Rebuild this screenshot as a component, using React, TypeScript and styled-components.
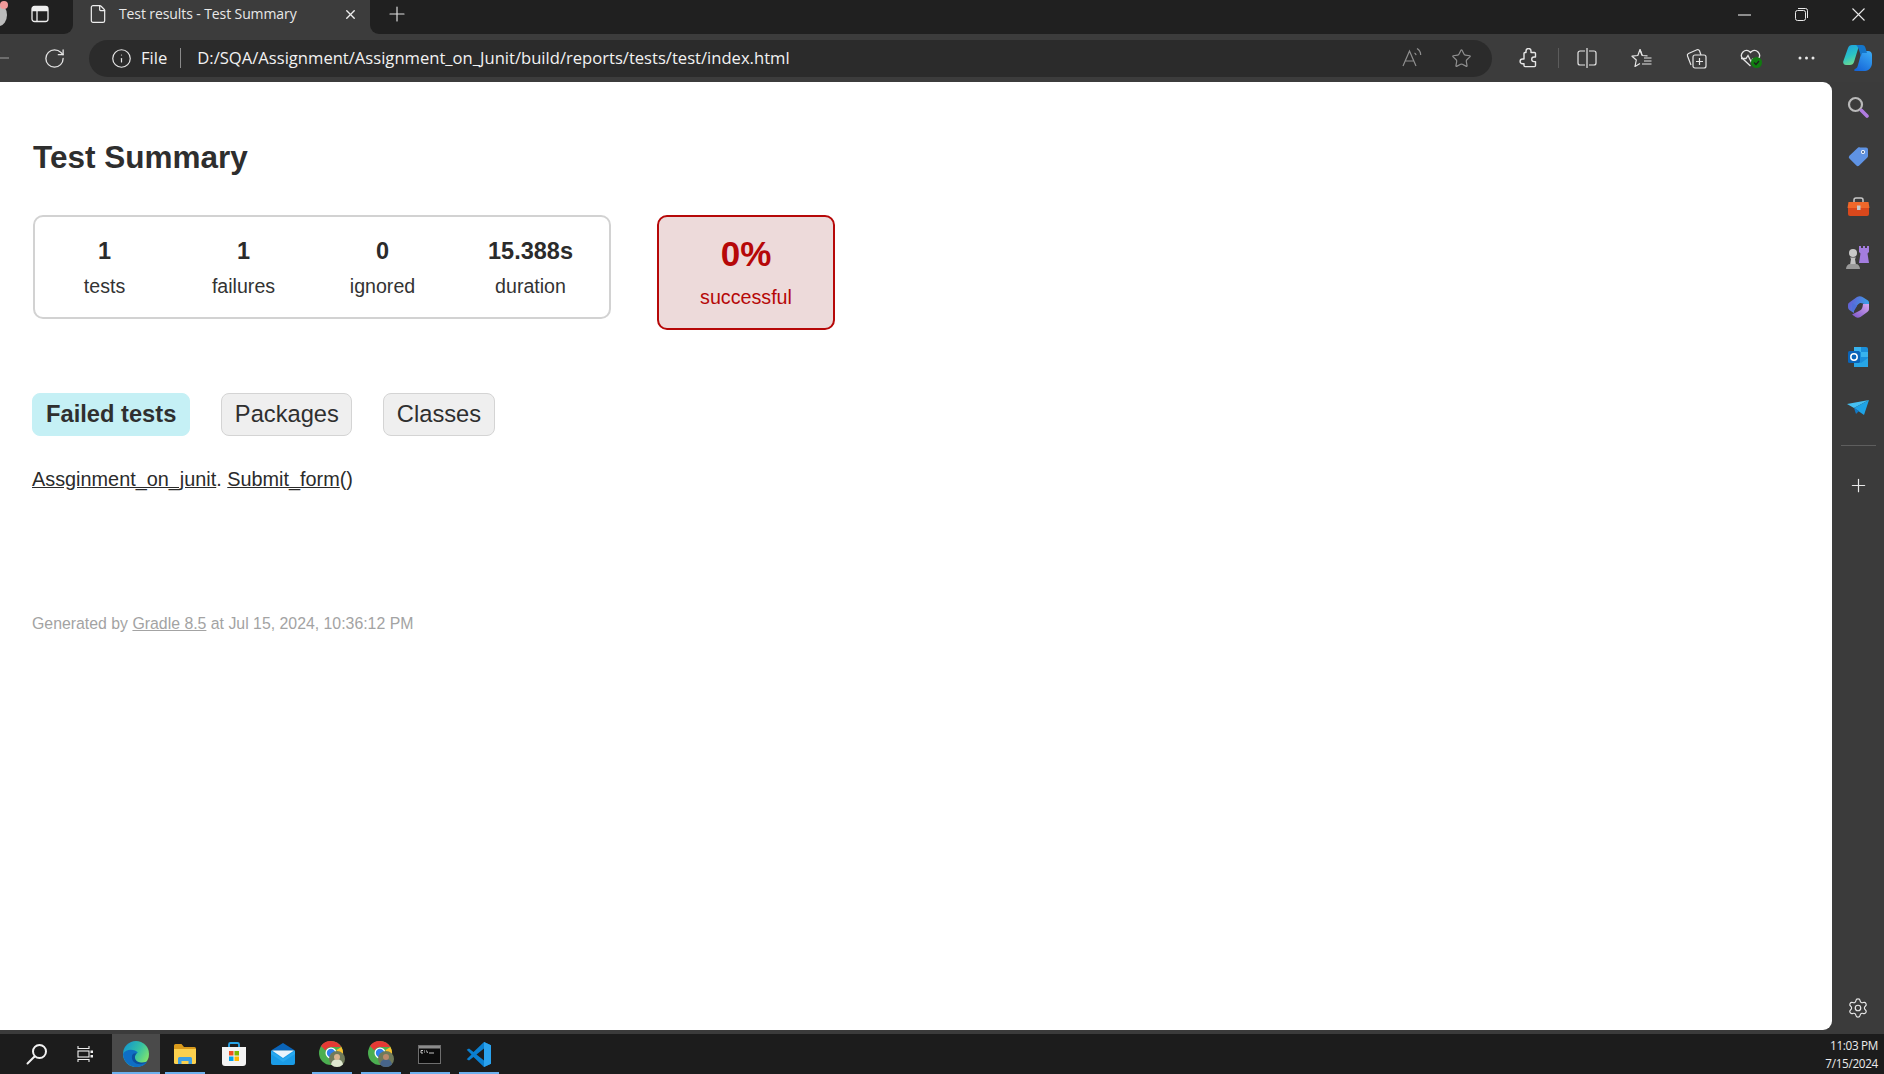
import React from 'react';
import styled, { createGlobalStyle } from 'styled-components';
import { File as FileIcon, Info, Plus, RotateCw, Settings, Star, X } from 'lucide-react';

const GlobalStyle = createGlobalStyle`
  html, body { margin: 0; padding: 0; height: 100%; overflow: hidden; }
  body { font-family: "Liberation Sans", Arial, sans-serif; background: #3b3b3b; }
`;

const Screen = styled.div`
  display: flex;
  flex-direction: column;
  width: 1884px;
  height: 1074px;
  overflow: hidden;
`;

const TabStrip = styled.div`
  display: flex;
  flex: none;
  height: 34px;
  background: #3c3c3c;
`;

const StripLeft = styled.div`
  position: relative;
  width: 73px;
  display: flex;
  align-items: center;
  padding: 0 0 6px 31px;
  box-sizing: border-box;
  background: #202020;
  border-bottom-right-radius: 9px;
  overflow: hidden;
`;

const StripRight = styled.div`
  flex: 1;
  display: flex;
  align-items: center;
  padding: 0 0 6px 15px;
  background: #202020;
  border-bottom-left-radius: 9px;
`;

const Tab = styled.div`
  width: 297px;
  display: flex;
  align-items: center;
  padding: 0 0 6px 15px;
  box-sizing: border-box;
  color: #eeeeee;
`;

const TabTitle = styled.span`
  width: 224px;
  margin: -2px 0 0 11px;
  font: 14px "Open Sans", "Noto Sans", sans-serif;
  letter-spacing: -0.1px;
  color: #e8e8e8;
  white-space: nowrap;
`;

const WindowControls = styled.div`
  display: flex;
  margin-left: auto;
  align-items: center;
  padding-right: 19px;
  gap: 44px;
`;

const Toolbar = styled.div`
  display: flex;
  flex: none;
  align-items: center;
  height: 48px;
  background: #3c3c3c;
`;

const Refresh = styled.div`
  display: flex;
  margin-left: 34px;
  color: #e4e4e4;
`;

const AddressPill = styled.div`
  display: flex;
  align-items: center;
  width: 1403px;
  height: 37px;
  margin-left: 23px;
  padding: 0 20px 0 22px;
  box-sizing: border-box;
  border-radius: 19px;
  background: #2b2b2b;
  color: #e6e6e6;
`;

const FileLabel = styled.span`
  margin: -2px 0 0 9px;
  font: 16.6px "Open Sans", "Noto Sans", sans-serif;
  color: #f2f2f2;
`;

const PillDivider = styled.span`
  width: 1px;
  height: 20px;
  margin: 0 16px 0 13px;
  background: #8a8a8a;
`;

const Url = styled.span`
  flex: 1;
  margin-top: -2px;
  font: 16.6px "Open Sans", "Noto Sans", sans-serif;
  color: #f2f2f2;
  white-space: nowrap;
`;

const PillIcons = styled.div`
  display: flex;
  align-items: center;
  gap: 29px;
  color: #8f8f8f;
`;

const ToolIcons = styled.div`
  display: flex;
  align-items: center;
  margin-left: 27px;
  color: #e6e6e6;
`;

const ToolSlot = styled.div<{ $w?: number }>`
  display: flex;
  justify-content: center;
  align-items: center;
  width: ${(p) => p.$w ?? 55}px;
`;

const ToolDivider = styled.span`
  width: 1px;
  height: 20px;
  margin-left: 20px;
  background: #5c5c5c;
`;

const Middle = styled.div`
  display: flex;
  flex: 1;
  min-height: 0;
`;

const ContentColumn = styled.div`
  display: flex;
  flex-direction: column;
  flex: none;
  width: 1832px;
  padding-bottom: 4px;
  box-sizing: border-box;
  background: #3b3b3b;
`;

const Page = styled.main`
  flex: 1;
  padding: 57px 0 0 33px;
  box-sizing: border-box;
  background: #ffffff;
  border-radius: 0 9px 9px 0;
  color: #2f2f2f;
`;

const Title = styled.h1`
  margin: 0;
  font-size: 31.5px;
  line-height: 36px;
  font-weight: 700;
  color: #2e2e2e;
`;

const SummaryRow = styled.div`
  display: flex;
  align-items: flex-start;
  margin-top: 40px;
`;

const SummaryBox = styled.div`
  display: grid;
  grid-template-columns: 139px 139px 139px 1fr;
  width: 578px;
  height: 104px;
  box-sizing: border-box;
  padding-top: 20px;
  border: 2px solid #d2d2d2;
  border-radius: 10px;
`;

const Stat = styled.div`
  text-align: center;
`;

const StatValue = styled.div`
  font-size: 23.5px;
  line-height: 28px;
  font-weight: 700;
  color: #2b2b2b;
`;

const StatLabel = styled.div`
  margin-top: 9px;
  font-size: 19.6px;
  line-height: 24px;
  color: #333333;
`;

const RateBox = styled.div`
  width: 178px;
  height: 115px;
  margin-left: 46px;
  padding-top: 16px;
  box-sizing: border-box;
  border: 2px solid #b60808;
  border-radius: 10px;
  background: #eddada;
  color: #b60808;
  text-align: center;
`;

const RateValue = styled.div`
  font-size: 35px;
  line-height: 42px;
  font-weight: 700;
`;

const RateLabel = styled.div`
  margin-top: 10px;
  font-size: 19.7px;
  line-height: 24px;
`;

const TabRow = styled.nav`
  display: flex;
  gap: 31px;
  margin: 63px 0 0 -1px;
`;

const ReportTab = styled.a<{ $active?: boolean }>`
  height: 43px;
  padding: 0 ${(p) => (p.$active ? 13 : 12.5)}px;
  box-sizing: border-box;
  border: 1px solid ${(p) => (p.$active ? '#c5f0f5' : '#d4d4d4')};
  border-radius: 8px;
  background: ${(p) => (p.$active ? '#c5f0f5' : '#efefef')};
  font-size: 23.7px;
  line-height: 41px;
  font-weight: ${(p) => (p.$active ? 700 : 400)};
  color: #2f2f2f;
`;

const TestLine = styled.p`
  margin: 0 0 0 -1px;
  padding-top: 31px;
  font-size: 19.85px;
  line-height: 24px;
  color: #2b2b2b;
`;

const TestLink = styled.a`
  color: #2b2b2b;
  text-decoration: underline;
`;

const Footer = styled.footer`
  margin: 123px 0 0 -1px;
  font-size: 15.85px;
  line-height: 20px;
  color: #a3a3a3;
`;

const FooterLink = styled.a`
  color: #a3a3a3;
  text-decoration: underline;
`;

const Sidebar = styled.aside`
  display: flex;
  flex-direction: column;
  align-items: center;
  flex: 1;
  padding-bottom: 4px;
  background: #3b3b3b;
  color: #e8e8e8;
`;

const SideSlot = styled.div`
  display: flex;
  justify-content: center;
  align-items: center;
  flex: none;
  width: 100%;
  height: 50px;
`;

const SideDivider = styled.div`
  flex: none;
  width: 35px;
  height: 1px;
  margin: 13px 0 29px;
  background: #5e5e5e;
`;

const GearSlot = styled(SideSlot)`
  margin-top: auto;
  height: 44px;
`;

const Taskbar = styled.footer`
  display: flex;
  flex: none;
  align-items: center;
  height: 40px;
  background: #1c1c1c;
`;

const TaskSearch = styled.div`
  display: flex;
  width: 77px;
  padding-left: 26px;
  box-sizing: border-box;
`;

const TaskView = styled.div`
  display: flex;
  width: 35px;
`;

const TaskApp = styled.div<{ $w: number; $open?: boolean; $active?: boolean; $bar?: number }>`
  position: relative;
  display: flex;
  justify-content: center;
  align-items: center;
  width: ${(p) => p.$w}px;
  height: 40px;
  background: ${(p) => (p.$active ? '#4a4a4a' : 'transparent')};
  &::after {
    content: '';
    display: ${(p) => (p.$open ? 'block' : 'none')};
    position: absolute;
    left: 50%;
    bottom: 0;
    width: ${(p) => p.$bar ?? p.$w}px;
    height: 2px;
    transform: translateX(-50%);
    background: #6cb0ee;
  }
`;

const Clock = styled.div`
  margin-left: auto;
  padding-right: 6px;
  font: 11.7px/18px "Open Sans", "Noto Sans", sans-serif;
  letter-spacing: -0.3px;
  color: #ececec;
  text-align: right;
`;

const Avatar = styled.span`
  position: absolute;
  left: -9px;
  top: 4px;
  width: 16px;
  height: 22px;
  border-radius: 50%;
  background: #bcbcbc;
  &::after {
    content: '';
    position: absolute;
    left: 9px;
    top: -3px;
    width: 8px;
    height: 8px;
    border-radius: 50%;
    background: #f19a9a;
  }
`;

const PanelIcon = () => (
  <svg width="18" height="18" viewBox="0 0 18 18" fill="none" stroke="#eeeeee" strokeWidth="1.3">
    <rect x="1" y="1.5" width="16" height="15" rx="2.5" />
    <path d="M1 5.5h16M6 5.5v11" />
    <path d="M1 3.500h16" strokeWidth="3" />
  </svg>
);

const MinimizeIcon = () => (
  <svg width="13" height="13" viewBox="0 0 13 13" stroke="#e8e8e8" strokeWidth="1.1">
    <path d="M0 7h13" />
  </svg>
);

const RestoreIcon = () => (
  <svg width="13" height="13" viewBox="0 0 13 13" fill="none" stroke="#e8e8e8" strokeWidth="1">
    <rect x="0.5" y="2.5" width="10" height="10" rx="2" />
    <path d="M3 .5h7.5a2 2 0 0 1 2 2V10" />
  </svg>
);

const CloseIcon = () => (
  <svg width="13" height="13" viewBox="0 0 13 13" stroke="#e8e8e8" strokeWidth="1.1">
    <path d="M.5.5l12 12M12.5.5l-12 12" />
  </svg>
);

const ReadAloudIcon = () => (
  <svg width="20" height="20" viewBox="0 0 20 20" fill="none" stroke="#8f8f8f" strokeWidth="1.2">
    <path d="M1 18L7.5 3 14 18M3.5 13h8" />
    <path d="M12.500 5c1 .4 1.400 1.100 1.600 2.200" />
    <path d="M15 .5c2.500 1.500 3.700 3.500 3.700 6.500" />
  </svg>
);

const PuzzleIcon = () => (
  <svg width="19" height="20" viewBox="0 0 19 20" fill="none" stroke="#e6e6e6" strokeWidth="1.4" strokeLinejoin="round">
    <path d="M7 4.500V3a2.500 2.500 0 0 1 5 0v1.500h3.500a1 1 0 0 1 1 1V9H15a2.200 2.200 0 0 0 0 4.600h1.500v4a1 1 0 0 1-1 1H6a1 1 0 0 1-1-1v-1.800H3.500a2.400 2.400 0 0 1 0-4.800H5V5.500a1 1 0 0 1 1-1z" />
  </svg>
);

const SplitIcon = () => (
  <svg width="20" height="20" viewBox="0 0 20 20" fill="none" stroke="#e6e6e6" strokeWidth="1.2">
    <path d="M8 3H3a2 2 0 0 0-2 2v10a2 2 0 0 0 2 2h5M12 3h5a2 2 0 0 1 2 2v10a2 2 0 0 1-2 2h-5M10 0v20" />
  </svg>
);

const FavoritesIcon = () => (
  <svg width="21" height="20" viewBox="0 0 21 20" fill="none" stroke="#e6e6e6" strokeWidth="1.2" strokeLinejoin="round">
    <path d="M11 7l-2-5.500L6.800 7.500 1 8.200 5.300 12 4 18.500l5-3" />
    <path d="M9 1.500L11.200 7.500l5.300.3" />
    <path d="M13 10h7.500M13 13h7.500M11 16h9.500" />
  </svg>
);

const CollectionsIcon = () => (
  <svg width="21" height="21" viewBox="0 0 21 21" fill="none" stroke="#e6e6e6" strokeWidth="1.2">
    <rect x="7" y="7" width="13" height="13" rx="2" />
    <path d="M13.500 10v7M10 13.500h7" />
    <path d="M5 17L1.500 8a2 2 0 0 1 1-2.500L11 1.700a2 2 0 0 1 2.500 1L15 7" />
  </svg>
);

const HeartIcon = () => (
  <svg width="23" height="21" viewBox="0 0 23 21" fill="none">
    <path d="M10.500 18L2.500 10.500a5 5 0 0 1 7-7l1 1 1-1a5 5 0 0 1 7 7" stroke="#e6e6e6" strokeWidth="1.3" />
    <path d="M1 10.500h5l2-3 3 6 2-3" stroke="#e6e6e6" strokeWidth="1.3" />
    <circle cx="16.500" cy="14.500" r="5.500" fill="#107c10" />
    <path d="M14 14.500l2 2 3-3.500" stroke="#1d1d1d" strokeWidth="1.2" />
  </svg>
);

const DotsIcon = () => (
  <svg width="17" height="4" viewBox="0 0 17 4" fill="#e8e8e8">
    <circle cx="2" cy="2" r="1.500" />
    <circle cx="8.500" cy="2" r="1.500" />
    <circle cx="15" cy="2" r="1.500" />
  </svg>
);

const CopilotIcon = () => (
  <svg width="30" height="28" viewBox="0 0 30 28">
    <defs>
      <linearGradient id="copA" x1="0" y1="0" x2="0.4" y2="1">
        <stop offset="0" stopColor="#1b9de2" />
        <stop offset="0.6" stopColor="#2cc4c4" />
        <stop offset="1" stopColor="#6fd88f" />
      </linearGradient>
      <linearGradient id="copB" x1="0.8" y1="0" x2="0.2" y2="1">
        <stop offset="0" stopColor="#39a8f4" />
        <stop offset="1" stopColor="#1565d8" />
      </linearGradient>
    </defs>
    <path d="M9 1h10c-2 0-3 1-4 4l-4 13c-.6 2-2 3-4 3H3c-2 0-3.400-2-2.600-4L5 4c.7-2 2-3 4-3z" fill="url(#copA)" />
    <path d="M20 7h5c2.500 0 4 1.500 4 4v8c0 4-3 8-7 8h-9c-2 0-2.600-1-1-2 2-1 2.500-2 3-4l3-11c.4-1.800 1-3 2-3z" fill="url(#copB)" />
    <path d="M19 1c2 0 3 1 3.500 3L24 9h-5l-1 3-2-6c-.6-2-1.500-4-3-5z" fill="#1475c9" />
  </svg>
);

const SearchApp = () => (
  <svg width="22" height="22" viewBox="0 0 22 22" fill="none">
    <circle cx="8.500" cy="8.500" r="6.500" stroke="#b9b9b9" strokeWidth="2.200" />
    <path d="M14.500 14.500l5.500 5.500" stroke="#b07ce0" strokeWidth="3.600" strokeLinecap="round" />
  </svg>
);

const TagApp = () => (
  <svg width="22" height="22" viewBox="0 0 22 22">
    <path d="M12.500 1.500H19a2 2 0 0 1 2 2V10a2 2 0 0 1-.6 1.400l-8.200 8.200a2 2 0 0 1-2.800 0l-7-7a2 2 0 0 1 0-2.800l8.700-8.200a2 2 0 0 1 1.400-.6z" fill="#5f93e4" />
    <circle cx="16" cy="6" r="2" fill="#ffffff" />
    <circle cx="16" cy="6" r="1" fill="#33507e" />
  </svg>
);

const ToolboxApp = () => (
  <svg width="23" height="20" viewBox="0 0 23 20">
    <path d="M7 6V3a2 2 0 0 1 2-2h5a2 2 0 0 1 2 2v3" fill="none" stroke="#c9c9c9" strokeWidth="1.500" />
    <path d="M1.500 5h20l1 6H.5z" fill="#f0682a" />
    <path d="M1 11h21v6a2 2 0 0 1-2 2H3a2 2 0 0 1-2-2z" fill="#d9481c" />
    <rect x="10" y="8.500" width="3.500" height="4.500" fill="#c8c8c8" />
  </svg>
);

const ChessApp = () => (
  <svg width="24" height="24" viewBox="0 0 24 24">
    <path d="M13 1h2v2h2V1h2v2h2V1h2v6l-1.500 1.500L23 18H13l1.500-9.500L13 7z" fill="#a37ddf" />
    <circle cx="7" cy="8" r="4" fill="#c8c8c8" />
    <path d="M4 12.500h6L9 14l1 6H4l1-6z" fill="#c2c2c2" />
    <path d="M0 24c0-3 2-5 4-5h6c2 0 4 2 4 5z" fill="#9a9a9a" />
  </svg>
);

const M365App = () => (
  <svg width="21" height="22" viewBox="0 0 21 22">
    <defs>
      <linearGradient id="m365a" x1="0" y1="0" x2="1" y2="0.3">
        <stop offset="0" stopColor="#6a55d0" />
        <stop offset="1" stopColor="#3aa0e8" />
      </linearGradient>
      <linearGradient id="m365b" x1="0" y1="1" x2="1" y2="0">
        <stop offset="0" stopColor="#7a54c8" />
        <stop offset="1" stopColor="#d7a6ee" />
      </linearGradient>
    </defs>
    <path d="M2 6l7-5c2-1.200 4-1 5.500 0L20 4.500c.7.500 1 1.200 1 2V11l-6-3.500c-2-1-4-.5-5 1L6 13v4L2 14.500C.7 13.700 0 12.500 0 11V9c0-1.200.7-2.200 2-3z" fill="url(#m365a)" />
    <path d="M21 8v5c0 1.300-.6 2.400-2 3.200l-6.500 4.800c-2 1-3.500 1-5 0L4 18.500 11 15c2-1 3-2 3.500-4L15 8z" fill="url(#m365b)" />
    <path d="M4 7l5 3-3 5-2-1z" fill="#4f6fd8" />
  </svg>
);

const OutlookApp = () => (
  <svg width="20" height="20" viewBox="0 0 20 20">
    <path d="M6 0h12a2 2 0 0 1 2 2v16a2 2 0 0 1-2 2H8a2 2 0 0 1-2-2z" fill="#1a8fdb" />
    <path d="M6 0h7v5H6zM13 5h7v5h-7z" fill="#37b3ee" />
    <path d="M6 11l7 5 7-5v9H6z" fill="#27a6e6" />
    <rect x="0" y="4" width="12" height="12" rx="1.500" fill="#0a64b8" />
    <circle cx="6" cy="10" r="3.200" fill="none" stroke="#ffffff" strokeWidth="1.500" />
  </svg>
);

const TelegramApp = () => (
  <svg width="22" height="15" viewBox="0 0 22 15">
    <path d="M0 4l22-4-15 8z" fill="#46c0f2" />
    <path d="M22 0L7 8l10 7z" fill="#1ea3e6" />
    <path d="M7 8l2 6 3-3z" fill="#1278c4" />
  </svg>
);

const TaskSearchIcon = () => (
  <svg width="22" height="22" viewBox="0 0 22 22" fill="none" stroke="#f2f2f2" strokeWidth="2">
    <circle cx="13.500" cy="8.500" r="6.500" />
    <path d="M8.500 13.500L1.500 20.500" strokeLinecap="round" />
  </svg>
);

const TaskViewIcon = () => (
  <svg width="16" height="16" viewBox="0 0 16 16" fill="none" stroke="#f0f0f0" strokeWidth="1.100">
    <path d="M1 0v2.500h11V0M1 16v-2.500h11V16" />
    <rect x="1" y="5" width="11" height="6" />
    <rect x="13.500" y="4.500" width="2.500" height="2.500" fill="#f0f0f0" stroke="none" />
    <rect x="13.500" y="9" width="2.500" height="2.500" fill="#f0f0f0" stroke="none" />
  </svg>
);

const EdgeApp = () => (
  <svg width="26" height="26" viewBox="0 0 26 26">
    <defs>
      <linearGradient id="edgeA" x1="0" y1="0" x2="1" y2="0.6">
        <stop offset="0" stopColor="#0d8fd6" />
        <stop offset="0.6" stopColor="#35c1a3" />
        <stop offset="1" stopColor="#7fe36f" />
      </linearGradient>
    </defs>
    <circle cx="13" cy="13" r="13" fill="url(#edgeA)" />
    <path d="M0 13C1 24 10 26 13 26c5 0 9-2 11-5-4 2-12 2-13-4-.5-3 1.500-5 4-5.500C12 8 3 7 0 13z" fill="#0f6ec4" />
    <path d="M9 15c-1 6 5 9 10 8 2-.5 4-1 5-2.500-4 2-11 1.500-12-3.500-.3-2 .5-3.500 2-4.500-2-.5-4.500 0-5 2.500z" fill="#0c4f9e" />
  </svg>
);

const ExplorerApp = () => (
  <svg width="22" height="20" viewBox="0 0 22 20">
    <path d="M0 1.500A1.500 1.500 0 0 1 1.500 0h6L10 3h10.500A1.500 1.500 0 0 1 22 4.500V6H0z" fill="#d99a1c" />
    <path d="M0 5h22v13.500a1.500 1.500 0 0 1-1.500 1.500h-19A1.500 1.500 0 0 1 0 18.500z" fill="#fbd04e" />
    <path d="M4 20v-5.500a1.500 1.500 0 0 1 1.500-1.500h11a1.500 1.500 0 0 1 1.500 1.500V20h-3.500v-3h-7v3z" fill="#3d9fe3" />
  </svg>
);

const StoreApp = () => (
  <svg width="24" height="24" viewBox="0 0 24 24">
    <path d="M7 6V2.500A1.500 1.500 0 0 1 8.500 1h7A1.500 1.500 0 0 1 17 2.500V6" fill="none" stroke="#27a4e8" strokeWidth="1.800" />
    <path d="M0 5h24v16a3 3 0 0 1-3 3H3a3 3 0 0 1-3-3z" fill="#f3f3f3" />
    <rect x="7" y="9" width="4.500" height="4.500" fill="#f25022" />
    <rect x="12.500" y="9" width="4.500" height="4.500" fill="#7fba00" />
    <rect x="7" y="14.500" width="4.500" height="4.500" fill="#00a4ef" />
    <rect x="12.500" y="14.500" width="4.500" height="4.500" fill="#ffb900" />
  </svg>
);

const MailApp = () => (
  <svg width="24" height="22" viewBox="0 0 24 22">
    <path d="M12 0l12 7.500H0z" fill="#0a64b8" />
    <path d="M0 7.500h24V20a2 2 0 0 1-2 2H2a2 2 0 0 1-2-2z" fill="#1a9be6" />
    <path d="M1 7.500h22L12 15z" fill="#e9f4fb" />
    <path d="M0 8l12 8 12-8v3L12 19 0 11z" fill="#28a8ee" />
  </svg>
);

const ChromeApp = ({ face, shirt, id }: { face: string; shirt: string; id: string }) => (
  <svg width="26" height="26" viewBox="0 0 26 26">
    <circle cx="12" cy="12" r="12" fill="#4caf50" />
    <path d="M12 0a12 12 0 0 1 10.400 6H12a6 6 0 0 0-5.500 3.500L2 5a12 12 0 0 1 10-5z" fill="#e53935" />
    <path d="M22.400 6A12 12 0 0 1 12 24l5-8.500A6 6 0 0 0 17.500 9z" fill="#fbc02d" />
    <circle cx="12" cy="12" r="5.500" fill="#ffffff" />
    <circle cx="12" cy="12" r="4.200" fill="#2f80ed" />
    <clipPath id={id}>
      <circle cx="18" cy="18" r="8" />
    </clipPath>
    <g clipPath={`url(#${id})`}>
      <rect x="10" y="10" width="16" height="16" fill="#6f7a5a" />
      <ellipse cx="18" cy="24" rx="6" ry="6" fill={shirt} />
      <circle cx="18" cy="16" r="3" fill={face} />
    </g>
  </svg>
);

const TerminalApp = () => (
  <svg width="23" height="19" viewBox="0 0 23 19">
    <rect x="0.500" y="0.500" width="22" height="18" fill="#0c0c0c" stroke="#6e6e6e" />
    <rect x="1" y="1" width="21" height="2.500" fill="#8c8c8c" />
    <path d="M3 5.500h2M3 8h2M3 5.500v2.500M6.500 5.500v1M6.500 7.500v.500M8.500 5.500l1 2.500M11 8h5" stroke="#d8d8d8" strokeWidth="0.900" fill="none" />
  </svg>
);

const VsCodeApp = () => (
  <svg width="25" height="25" viewBox="0 0 25 25">
    <path d="M18 0l7 3.300v18.400L18 25 7.500 15 3 18.500.7 17.300 5.500 12.500.7 7.700 3 6.500 7.500 10z" fill="#0a7fd0" />
    <path d="M18 6.500L10.500 12.500 18 18.500z" fill="#1c1c1c" />
    <path d="M18 0l7 3.300v18.400L18 25z" fill="#2aa2ee" />
  </svg>
);

export default function App() {
  return (
    <Screen>
      <GlobalStyle />
      <TabStrip>
        <StripLeft>
          <Avatar />
          <PanelIcon />
        </StripLeft>
        <Tab>
          <FileIcon size={20} strokeWidth={1.2} absoluteStrokeWidth />
          <TabTitle>Test results - Test Summary</TabTitle>
          <X size={15} strokeWidth={1.4} absoluteStrokeWidth />
        </Tab>
        <StripRight>
          <Plus size={24} strokeWidth={1.2} absoluteStrokeWidth color="#dddddd" />
          <WindowControls>
            <MinimizeIcon />
            <RestoreIcon />
            <CloseIcon />
          </WindowControls>
        </StripRight>
      </TabStrip>
      <Toolbar>
        <svg width="9" height="2" viewBox="0 0 9 2">
          <path d="M0 1h9" stroke="#8f8f8f" strokeWidth="1.200" />
        </svg>
        <Refresh>
          <RotateCw size={23} strokeWidth={1.3} absoluteStrokeWidth />
        </Refresh>
        <AddressPill>
          <Info size={21} strokeWidth={1.2} absoluteStrokeWidth />
          <FileLabel>File</FileLabel>
          <PillDivider />
          <Url>D:/SQA/Assignment/Assignment_on_Junit/build/reports/tests/test/index.html</Url>
          <PillIcons>
            <ReadAloudIcon />
            <Star size={21} strokeWidth={1.2} absoluteStrokeWidth />
          </PillIcons>
        </AddressPill>
        <ToolIcons>
          <PuzzleIcon />
          <ToolDivider />
          <ToolSlot>
            <SplitIcon />
          </ToolSlot>
          <ToolSlot>
            <FavoritesIcon />
          </ToolSlot>
          <ToolSlot>
            <CollectionsIcon />
          </ToolSlot>
          <ToolSlot>
            <HeartIcon />
          </ToolSlot>
          <ToolSlot>
            <DotsIcon />
          </ToolSlot>
          <ToolSlot $w={47}>
            <CopilotIcon />
          </ToolSlot>
        </ToolIcons>
      </Toolbar>
      <Middle>
        <ContentColumn>
          <Page>
            <Title>Test Summary</Title>
            <SummaryRow>
              <SummaryBox>
                <Stat>
                  <StatValue>1</StatValue>
                  <StatLabel>tests</StatLabel>
                </Stat>
                <Stat>
                  <StatValue>1</StatValue>
                  <StatLabel>failures</StatLabel>
                </Stat>
                <Stat>
                  <StatValue>0</StatValue>
                  <StatLabel>ignored</StatLabel>
                </Stat>
                <Stat>
                  <StatValue>15.388s</StatValue>
                  <StatLabel>duration</StatLabel>
                </Stat>
              </SummaryBox>
              <RateBox>
                <RateValue>0%</RateValue>
                <RateLabel>successful</RateLabel>
              </RateBox>
            </SummaryRow>
            <TabRow>
              <ReportTab $active>Failed tests</ReportTab>
              <ReportTab>Packages</ReportTab>
              <ReportTab>Classes</ReportTab>
            </TabRow>
            <TestLine>
              <TestLink>Assginment_on_junit</TestLink>. <TestLink>Submit_form</TestLink>()
            </TestLine>
            <Footer>
              Generated by <FooterLink>Gradle 8.5</FooterLink> at Jul 15, 2024, 10:36:12 PM
            </Footer>
          </Page>
        </ContentColumn>
        <Sidebar>
          <SideSlot>
            <SearchApp />
          </SideSlot>
          <SideSlot>
            <TagApp />
          </SideSlot>
          <SideSlot>
            <ToolboxApp />
          </SideSlot>
          <SideSlot>
            <ChessApp />
          </SideSlot>
          <SideSlot>
            <M365App />
          </SideSlot>
          <SideSlot>
            <OutlookApp />
          </SideSlot>
          <SideSlot>
            <TelegramApp />
          </SideSlot>
          <SideDivider />
          <Plus size={21} strokeWidth={1.2} absoluteStrokeWidth />
          <GearSlot>
            <Settings size={22} strokeWidth={1.2} absoluteStrokeWidth />
          </GearSlot>
        </Sidebar>
      </Middle>
      <Taskbar>
        <TaskSearch>
          <TaskSearchIcon />
        </TaskSearch>
        <TaskView>
          <TaskViewIcon />
        </TaskView>
        <TaskApp $w={48} $active $open>
          <EdgeApp />
        </TaskApp>
        <TaskApp $w={49} $open $bar={40}>
          <ExplorerApp />
        </TaskApp>
        <TaskApp $w={49}>
          <StoreApp />
        </TaskApp>
        <TaskApp $w={49}>
          <MailApp />
        </TaskApp>
        <TaskApp $w={49} $open $bar={40}>
          <ChromeApp face="#d9b48f" shirt="#dfe8d0" id="chromeFaceA" />
        </TaskApp>
        <TaskApp $w={49} $open $bar={40}>
          <ChromeApp face="#b98a6c" shirt="#47648a" id="chromeFaceB" />
        </TaskApp>
        <TaskApp $w={49} $open $bar={40}>
          <TerminalApp />
        </TaskApp>
        <TaskApp $w={49} $open $bar={40}>
          <VsCodeApp />
        </TaskApp>
        <Clock>
          11:03 PM
          <br />
          7/15/2024
        </Clock>
      </Taskbar>
    </Screen>
  );
}
